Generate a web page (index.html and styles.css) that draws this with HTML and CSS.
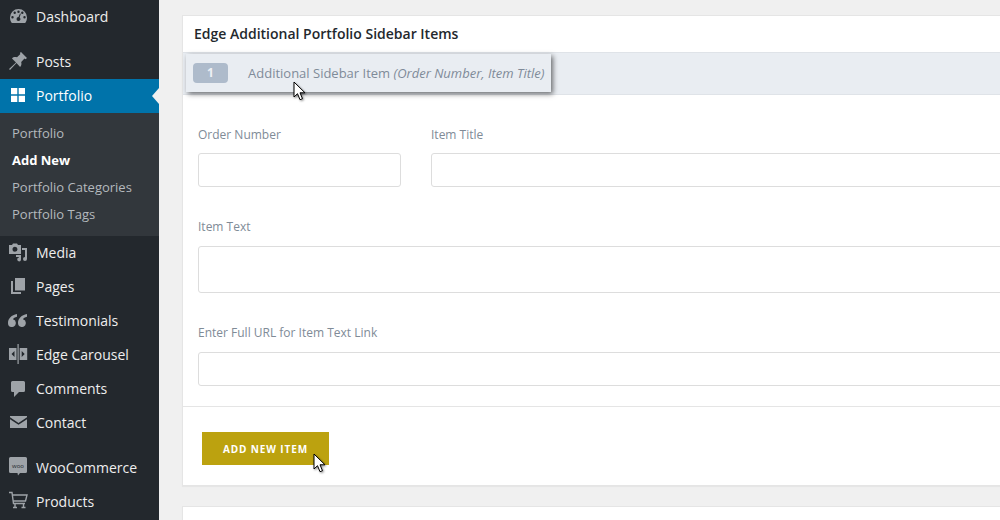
FILE: index.html
```html
<!DOCTYPE html>
<html lang="en">
<head>
<meta charset="utf-8">
<title>Add New Portfolio</title>
<link rel="stylesheet" href="styles.css">
</head>
<body>
<div class="app">
  <nav class="sidebar">
    <a class="menu-item"><svg class="icon" viewBox="0 0 20 20"><path d="M10.500 3A8.500 8.500 0 0 0 2 11.500c0 2 .6 4 1.800 5.500h13.400c1.200-1.500 1.800-3.500 1.800-5.500A8.500 8.500 0 0 0 10.500 3zM6.700 5.500a1.200 1.200 0 1 1 0 2.400 1.200 1.200 0 0 1 0-2.400zm3.800-1a1.200 1.200 0 1 1 0 2.400 1.200 1.200 0 0 1 0-2.400zm3.800 1a1.200 1.200 0 1 1 0 2.400 1.200 1.200 0 0 1 0-2.400zM4.500 10a1.200 1.200 0 1 1 0 2.400 1.200 1.200 0 0 1 0-2.400zm12 0a1.200 1.200 0 1 1 0 2.400 1.200 1.200 0 0 1 0-2.400zM10.500 11l1.500-3.500.8.300-1.200 3.800c.5.400.9 1 .9 1.700a2 2 0 1 1-2-2.300z" fill-rule="evenodd"/></svg>Dashboard</a>
    <a class="menu-item group-start"><svg class="icon" viewBox="0 0 20 20"><path d="M13 1l6 6-1.500 1.200-1-.6-3.300 3.400c.6 2.200.1 3.900-1.100 5L8.500 12 2 19l-1-1 7-6.500L4 7.400c1.100-1.200 2.800-1.700 5-1.100l3.400-3.300-.6-1z"/></svg>Posts</a>
    <a class="menu-item active"><svg class="icon" viewBox="0 0 20 20"><path d="M3 3h6.300v6.300H3zM10.700 3H17v6.300h-6.300zM3 10.700h6.300V17H3zM10.700 10.700H17V17h-6.300z"/></svg>Portfolio</a>
    <div class="submenu">
      <a class="sub-item">Portfolio</a>
      <a class="sub-item current">Add New</a>
      <a class="sub-item">Portfolio Categories</a>
      <a class="sub-item">Portfolio Tags</a>
    </div>
    <a class="menu-item"><svg class="icon" viewBox="0 0 20 20"><path d="M1 3h3l1-1.500h4L10 3h3v9H1zm6 1.700a2.500 2.500 0 1 0 0 5 2.500 2.500 0 0 0 0-5zM14 6h5v11a2 2 0 1 1-2-2V8h-3zM8 13h5v4.500a1.900 1.900 0 1 1-2-1.900V15H8z" fill-rule="evenodd"/></svg>Media</a>
    <a class="menu-item"><svg class="icon" viewBox="0 0 20 20"><path d="M7 2h10v12.500H7z"/><path d="M5 5H3v13h10v-2H5z"/></svg>Pages</a>
    <a class="menu-item"><svg class="icon" viewBox="0 0 20 20"><path d="M9 4C3.500 5 0 8.500 0 13a3.900 3.900 0 1 0 5-3.700C5.300 8.200 7 7.200 9 6.800zM19 4c-5.500 1-9 4.500-9 9a3.900 3.900 0 1 0 5-3.700c.3-1.100 2-2.100 4-2.500z"/></svg>Testimonials</a>
    <a class="menu-item"><svg class="icon" viewBox="0 0 20 20"><path d="M9.500 0h1.200v20H9.500z"/><path d="M1 4h7.500v12H1zm5.500 3L3.500 10l3 3zM11.700 4h7.500v12h-7.500zm2 3v6l3-3z" fill-rule="evenodd"/></svg>Edge Carousel</a>
    <a class="menu-item"><svg class="icon" viewBox="0 0 20 20"><path d="M4.500 3h11A1.500 1.500 0 0 1 17 4.500v8a1.500 1.500 0 0 1-1.500 1.500H11l-5 5v-5H4.500A1.500 1.500 0 0 1 3 12.500v-8A1.500 1.500 0 0 1 4.500 3z"/></svg>Comments</a>
    <a class="menu-item"><svg class="icon" viewBox="0 0 20 20"><path d="M2 4h17v1.300L10.500 11 2 5.300zM2 7.300l8.500 5.500L19 7.300V16H2z"/></svg>Contact</a>
    <a class="menu-item group-start"><svg class="icon" viewBox="0 0 20 20"><path d="M2.500 0h15A1.500 1.500 0 0 1 19 1.500v13a1.500 1.500 0 0 1-1.500 1.500H12l-2 2.500L9.500 16h-7A1.500 1.500 0 0 1 1 14.500v-13A1.500 1.500 0 0 1 2.500 0z"/><text class="woo" x="10" y="10.500" text-anchor="middle">woo</text></svg>WooCommerce</a>
    <a class="menu-item"><svg class="icon icon-line" viewBox="0 0 20 20"><path d="M1 1.500h3l1.500 11h11.500M4.500 4H19l-1.500 6H5.500M7 13v3M15.500 13v3M5 16.500h4M13.500 16.500h4"/></svg>Products</a>
  </nav>

  <main class="content">
    <section class="card">
      <h2 class="card-title">Edge Additional Portfolio Sidebar Items</h2>
      <div class="sort-band"></div>
      <div class="fields">
        <div class="field-row">
          <div class="field field-order">
            <label class="label">Order Number</label>
            <div class="input"></div>
          </div>
          <div class="field field-grow">
            <label class="label">Item Title</label>
            <div class="input"></div>
          </div>
        </div>
        <div class="field">
          <label class="label">Item Text</label>
          <div class="input input-tall"></div>
        </div>
        <div class="field">
          <label class="label">Enter Full URL for Item Text Link</label>
          <div class="input"></div>
        </div>
      </div>
      <div class="actions">
        <a class="button">ADD NEW ITEM</a>
      </div>

      <div class="drag-item">
        <span class="badge">1</span>
        <span class="drag-text">Additional Sidebar Item <em>(Order Number, Item Title)</em></span>
      </div>
      <svg class="cursor cursor-top" viewBox="0 0 14 20"><path d="M1 1v15l3.500-3.300 2.500 6 2.500-1-2.500-5.900H12z"/></svg>
      <svg class="cursor cursor-bottom" viewBox="0 0 14 20"><path d="M1 1v15l3.500-3.300 2.500 6 2.500-1-2.500-5.900H12z"/></svg>
    </section>
    <section class="card card-next">
      <h2 class="card-title">Edge Custom Fields</h2>
    </section>
  </main>
</div>
</body>
</html>
```
FILE: styles.css
```css
* { box-sizing: border-box; }
html, body { margin: 0; height: 100%; overflow: hidden; }
body { font-family: "Open Sans", "Liberation Sans", sans-serif; background: #f0f0f0; }
.app { display: flex; width: 1000px; height: 520px; overflow: hidden; }

.sidebar { flex: 0 0 159px; background: #23282d; }
.menu-item { display: flex; align-items: center; height: 34px; padding: 0 0 2px 8px; font-size: 14px; color: #eee; }
.group-start { margin-top: 11px; }
.icon { flex: 0 0 20px; width: 20px; height: 20px; margin-right: 8px; fill: #9ea3a8; }
.icon-line { fill: none; stroke: #9ea3a8; stroke-width: 1.400; }
.woo { font-family: "Open Sans", sans-serif; font-size: 6px; fill: #23282d; }
.active { position: relative; background: #0073aa; color: #fff; }
.active .icon { fill: #fff; }
.active::after { content: ""; position: absolute; right: 0; top: 9px; border: 8px solid transparent; border-right: 7px solid #f0f0f0; border-left-width: 0; }
.submenu { height: 123px; padding-top: 6px; background: #32373c; }
.sub-item { display: flex; align-items: center; height: 27px; padding-left: 12px; font-size: 13px; color: #b4b9be; }
.current { color: #fff; font-weight: 700; }

.content { flex: 1; min-width: 0; padding: 15px 0 0 23px; }
.card { position: relative; width: 880px; background: #fff; border: 1px solid #e5e5e5; box-shadow: 0 1px 1px rgba(0,0,0,.04); }
.card-title { margin: 0; height: 36px; padding-left: 11px; font-size: 14px; line-height: 35px; font-weight: 600; color: #23282d; }
.sort-band { height: 43px; background: #e9edf2; border-top: 1px solid #dfe3e8; border-bottom: 1px solid #dfe3e8; }
.fields { display: flex; flex-direction: column; height: 312px; padding: 29px 15px 0; gap: 30px; border-bottom: 1px solid #e5e5e5; }
.field-row { display: flex; gap: 30px; }
.field-order { flex: 0 0 203px; }
.field-grow { flex: 1; }
.label { display: block; height: 20px; font-size: 12px; line-height: 19px; color: #808b97; }
.field-row .label { line-height: 21px; }
.input { height: 34px; margin-top: 9px; background: #fff; border: 1px solid #ddd; border-radius: 3px; }
.input-tall { height: 47px; }
.actions { height: 78px; padding: 25px 19px 0; }
.button { display: flex; align-items: center; justify-content: center; width: 127px; height: 33px; font-size: 10px; font-weight: 700; letter-spacing: .9px; color: #fff; background: #bca20f; }
.card-next { margin-top: 20px; height: 60px; }
.card-next .card-title { line-height: 38px; }

.drag-item { position: absolute; left: 3px; top: 38px; display: flex; align-items: center; width: 365px; height: 38px; padding-left: 7px; background: #e9edf2; box-shadow: 2px 2px 5px rgba(0,0,0,.55); }
.badge { flex: 0 0 35px; height: 20px; margin-right: 20px; font-size: 12px; font-weight: 700; line-height: 20px; text-align: center; color: #eef1f5; background: #aebbcb; border-radius: 4px; }
.drag-text { font-size: 13px; color: #7f8b99; white-space: nowrap; }
.cursor { position: absolute; width: 14px; height: 20px; fill: #fff; stroke: #000; stroke-width: 1; filter: drop-shadow(1px 1px 1px rgba(0,0,0,.45)); }
.cursor-top { left: 110px; top: 65px; }
.cursor-bottom { left: 130px; top: 437px; }
```
